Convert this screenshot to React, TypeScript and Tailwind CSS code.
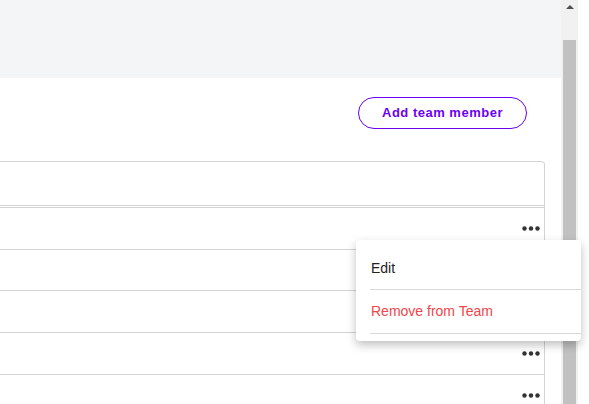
const rows = [0, 1, 2, 3, 4];

function Dots() {
    return (
        <svg width="18" height="5" viewBox="0 0 18 5" className="block">
            <circle cx="2.5" cy="2.5" r="2.2" fill="#333" />
            <circle cx="9" cy="2.5" r="2.2" fill="#333" />
            <circle cx="15.5" cy="2.5" r="2.2" fill="#333" />
        </svg>
    );
}

export default function App() {
    return (
        <div className="relative flex w-[589px] h-[404px] overflow-hidden bg-white font-['Liberation_Sans',Arial,sans-serif]">
            <main className="flex-1 flex flex-col">
                <div className="h-[78px] shrink-0 bg-[#f4f5f7]" />

                <div className="flex shrink-0 justify-end pr-[34px] pt-[19px]">
                    <button className="h-[32px] w-[169px] rounded-full border border-[#6a00f4] text-[13px] font-bold tracking-[0.5px] text-[#6a00f4]">
                        Add team member
                    </button>
                </div>

                <div className="-ml-4 mr-4 mt-[32px] shrink-0 rounded-tr-[4px] border-r border-[#d3d3d3]">
                    <div className="h-[45px] rounded-tr-[4px] border-y border-[#d3d3d3]" />
                    <div className="mt-[1px] border-t border-[#d3d3d3]">
                        {rows.map((r) => (
                            <div
                                key={r}
                                className={`flex items-center justify-end border-b border-[#d3d3d3] pr-[4px] ${r === 1 ? "h-[41px]" : "h-[42px]"}`}
                            >
                                <Dots />
                            </div>
                        ))}
                    </div>
                </div>
            </main>

            {/* fake scrollbar */}
            <div className="relative w-[17px] shrink-0 bg-[#f1f1f1]">
                <div className="mx-auto mt-[5px] h-0 w-0 border-x-[4px] border-b-[4px] border-x-transparent border-b-[#505050]" />
                <div className="absolute left-[2px] right-[2px] top-[40px] bottom-0 bg-[#c1c1c1]" />
            </div>
            <div className="w-[11px] shrink-0 bg-white" />

            {/* row menu */}
            <div className="absolute left-[356px] top-[240px] w-[225px] rounded-[4px] bg-white pt-2 pb-[7px] shadow-[0_4px_10px_rgba(0,0,0,0.25)]">
                <div className="ml-[14px] box-border flex h-[42px] items-center border-b border-[#d9d9d9] pl-[1px] text-[14px] text-[#222]">
                    Edit
                </div>
                <div className="ml-[14px] box-border flex h-[44px] items-center border-b border-[#d9d9d9] pl-[1px] text-[14px] text-[#f0454a]">
                    Remove from Team
                </div>
            </div>
        </div>
    );
}
